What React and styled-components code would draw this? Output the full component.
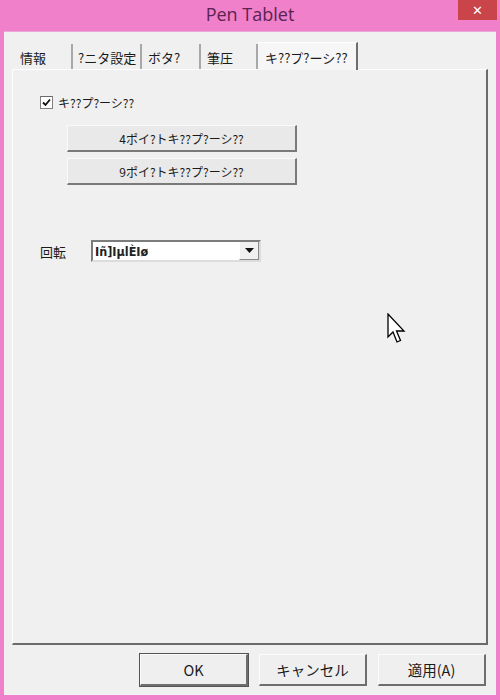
import React from 'react';
import styled, { createGlobalStyle } from 'styled-components';

const PINK = '#ef80c9';
const FACE = '#f0f0f0';
const JP = `"Noto Sans CJK JP", "Liberation Sans", sans-serif`;

const GlobalStyle = createGlobalStyle`
  html, body {
    margin: 0;
    padding: 0;
    background: ${PINK};
  }
`;

const Window = styled.div`
  position: relative;
  width: 500px;
  height: 700px;
  background: ${PINK};
  display: flex;
  flex-direction: column;
  overflow: hidden;
`;

const TitleBar = styled.div`
  height: 31px;
  display: flex;
  align-items: center;
  justify-content: center;
  font-family: "Open Sans", "Noto Sans", sans-serif;
  font-size: 18px;
  color: #5c2350;
  padding-bottom: 3px;
  box-sizing: border-box;
`;

const CloseButton = styled.div`
  position: absolute;
  top: 0;
  right: 3px;
  width: 39px;
  height: 20px;
  background: #c94549;
  color: #fff;
  font-family: "DejaVu Sans", sans-serif;
  font-weight: bold;
  font-size: 13px;
  display: flex;
  align-items: center;
  justify-content: center;
`;

const Client = styled.div`
  flex: 1;
  margin: 0 4px 5px 4px;
  background: ${FACE};
  display: flex;
  flex-direction: column;
  padding: 9px 8px 0 8px;
  border-top: 1px solid #e9a9d5;
`;

const TabStrip = styled.div`
  display: flex;
  align-items: flex-end;
  height: 28px;
  position: relative;
  z-index: 1;
`;

const Tab = styled.div`
  width: ${(p) => p.$w}px;
  height: ${(p) => (p.$active ? 28 : 25)}px;
  box-sizing: border-box;
  padding-left: ${(p) => p.$pad}px;
  display: flex;
  align-items: center;
  white-space: nowrap;
  font-family: ${JP};
  font-size: 13px;
  color: #1a1a1a;
  background: ${(p) => (p.$active ? '#f6f6f6' : FACE)};
  border-right: 2px solid ${(p) => (p.$active ? '#6e6e6e' : '#a8a8a8')};
  border-top: ${(p) => (p.$active ? '1px solid #fff' : 'none')};
  margin-bottom: ${(p) => (p.$active ? -1 : 0)}px;
  padding-top: 2px;
`;

const Panel = styled.div`
  height: 576px;
  box-sizing: border-box;
  border-left: 1px solid #ffffff;
  border-top: 1px solid #ffffff;
  border-right: 2px solid #6b6b6b;
  border-bottom: 2px solid #6b6b6b;
  padding: 24px 0 0 27px;
  position: relative;
`;

const CheckRow = styled.label`
  display: flex;
  align-items: center;
  gap: 5px;
  font-family: ${JP};
  font-size: 12px;
  color: #1a1a1a;
`;

const CheckBox = styled.span`
  width: 11px;
  height: 11px;
  border: 1px solid #808080;
  border-top-color: #6a6a6a;
  background: #fff;
  display: flex;
  align-items: center;
  justify-content: center;
`;

const ButtonStack = styled.div`
  display: flex;
  flex-direction: column;
  gap: 6px;
  margin: 14px 0 0 27px;
`;

const WideButton = styled.div`
  width: 230px;
  height: 27px;
  box-sizing: border-box;
  background: #e9e9e9;
  border: 1px solid #fafafa;
  border-right: 2px solid #7a7a7a;
  border-bottom: 2px solid #7a7a7a;
  display: flex;
  align-items: center;
  justify-content: center;
  font-family: ${JP};
  font-size: 12px;
  color: #1a1a1a;
`;

const RotateRow = styled.div`
  display: flex;
  align-items: center;
  margin-top: 55px;
  gap: 25px;
  font-family: ${JP};
  font-size: 13px;
  color: #1a1a1a;
`;

const Select = styled.div`
  width: 170px;
  height: 22px;
  box-sizing: border-box;
  background: #fff;
  border: 2px solid #7c7c7c;
  border-right-color: #dcdcdc;
  border-bottom-color: #dcdcdc;
  display: flex;
  align-items: stretch;
`;

const SelectText = styled.div`
  flex: 1;
  padding-left: 2px;
  display: flex;
  align-items: center;
  font-family: "DejaVu Sans Condensed", "DejaVu Sans", sans-serif;
  font-weight: bold;
  font-size: 12.5px;
  color: #222;
`;

const SelectArrow = styled.div`
  width: 18px;
  background: ${FACE};
  border-left: 1px solid #fff;
  border-right: 1px solid #8a8a8a;
  border-bottom: 1px solid #8a8a8a;
  display: flex;
  align-items: center;
  justify-content: center;
`;

const Cursor = styled.svg`
  position: absolute;
  left: 374px;
  top: 243px;
`;

const Footer = styled.div`
  display: flex;
  justify-content: flex-end;
  gap: 11px;
  padding: 9px 2px 0 0;
`;

const DialogButton = styled.div`
  width: 108px;
  height: 32px;
  box-sizing: border-box;
  background: #efefef;
  border: 1px solid #fbfbfb;
  border-right: 2px solid #6e6e6e;
  border-bottom: 2px solid #6e6e6e;
  outline: ${(p) => (p.$default ? '1px solid #555' : 'none')};
  display: flex;
  align-items: center;
  justify-content: center;
  font-family: ${JP};
  font-size: 14.5px;
  color: #1a1a1a;
`;

const tabs = [
  { label: '情報', w: 61, pad: 8 },
  { label: '?ニタ設定', w: 69, pad: 5 },
  { label: 'ボタ?', w: 59, pad: 6 },
  { label: '筆圧', w: 57, pad: 6 },
  { label: 'キ??プ?ーシ??', w: 100, pad: 7, active: true },
];

const App = () => (
  <>
    <GlobalStyle />
    <Window>
      <TitleBar>Pen Tablet</TitleBar>
      <CloseButton>✕</CloseButton>
      <Client>
        <TabStrip>
          {tabs.map((t) => (
            <Tab key={t.label} $w={t.w} $pad={t.pad} $active={t.active}>
              {t.label}
            </Tab>
          ))}
        </TabStrip>
        <Panel>
          <CheckRow>
            <CheckBox>
              <svg width="9" height="9" viewBox="0 0 9 9">
                <path d="M1 4.5 L3.5 7 L8 1.5" fill="none" stroke="#111" strokeWidth="1.8" />
              </svg>
            </CheckBox>
            キ??プ?ーシ??
          </CheckRow>
          <ButtonStack>
            <WideButton>4ポイ?トキ??プ?ーシ??</WideButton>
            <WideButton>9ポイ?トキ??プ?ーシ??</WideButton>
          </ButtonStack>
          <RotateRow>
            回転
            <Select>
              <SelectText>Iñ]IµlÈIø</SelectText>
              <SelectArrow>
                <svg width="9" height="5" viewBox="0 0 9 5">
                  <path d="M0 0 H9 L4.5 5 Z" fill="#111" />
                </svg>
              </SelectArrow>
            </Select>
          </RotateRow>
          <Cursor width="20" height="32" viewBox="0 0 20 32">
            <path
              d="M1 1 L1 24 L6 19 L10 29 L13.5 27.5 L9.5 18 L17 18 Z"
              fill="#fff"
              stroke="#000"
              strokeWidth="1.3"
              strokeLinejoin="miter"
            />
          </Cursor>
        </Panel>
        <Footer>
          <DialogButton $default>OK</DialogButton>
          <DialogButton>キャンセル</DialogButton>
          <DialogButton>適用(A)</DialogButton>
        </Footer>
      </Client>
    </Window>
  </>
);

export default App;
